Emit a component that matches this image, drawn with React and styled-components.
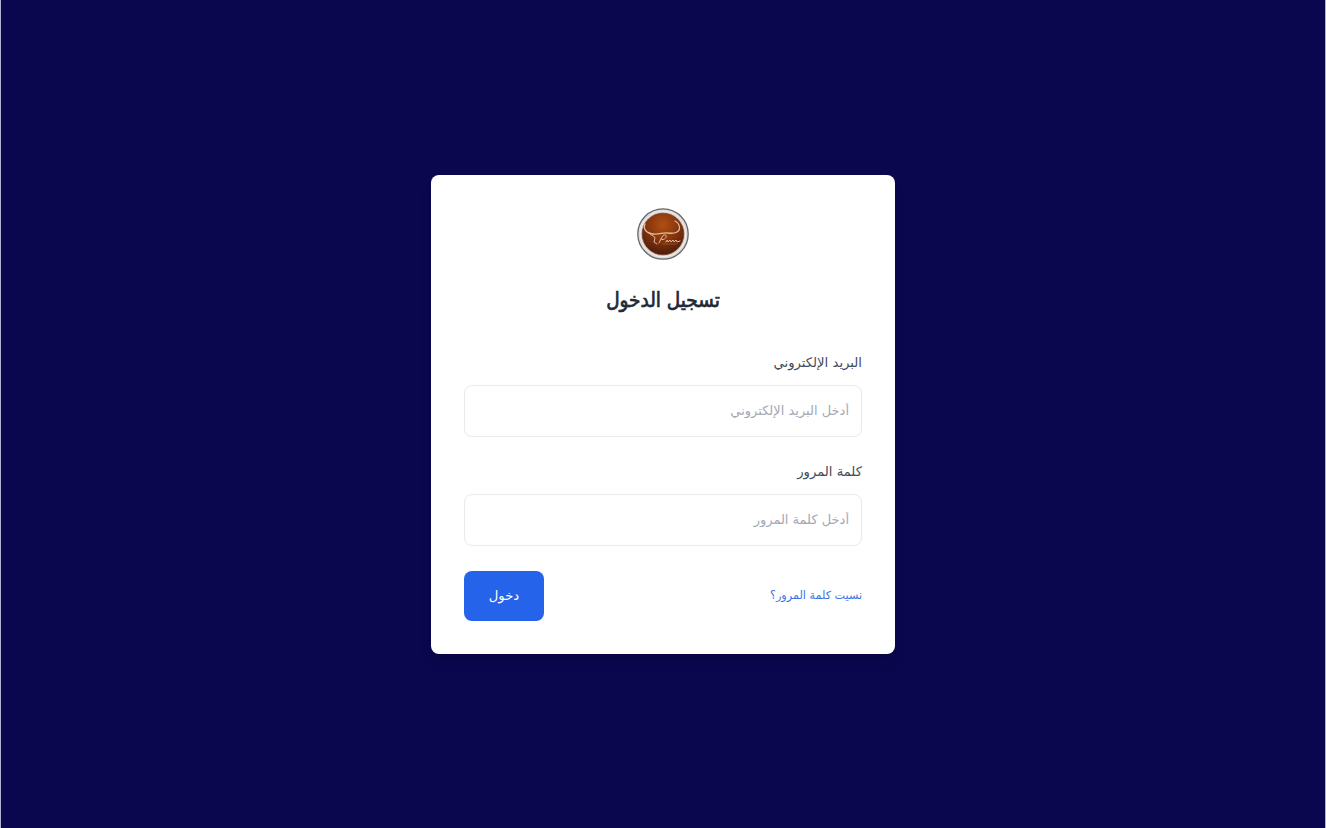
import React from "react";
import styled, { createGlobalStyle } from "styled-components";

const GlobalStyle = createGlobalStyle`
  *, *::before, *::after { box-sizing: border-box; }
  body { margin: 0; }
  body, input, button { font-family: "DejaVu Sans", sans-serif; }
`;

const Page = styled.main`
  display: flex;
  justify-content: center;
  align-items: flex-start;
  height: 828px;
  padding-top: 175px;
  background: #0b074f;
  border: solid #b3b1d0;
  border-width: 0 1px;
`;

const Card = styled.form`
  display: flex;
  flex-direction: column;
  width: 464px;
  height: 479px;
  padding: 33px;
  background: #fff;
  border-radius: 8px;
  box-shadow: 0 10px 15px -3px rgba(0, 0, 0, 0.1), 0 4px 6px -4px rgba(0, 0, 0, 0.1);
`;

const Logo = styled.svg`
  display: block;
  width: 52px;
  height: 52px;
  margin: 0 auto;
`;

const Title = styled.h1`
  margin: 24px 0 34px;
  font-family: "DejaVu Sans Condensed", "DejaVu Sans", sans-serif;
  font-size: 20.5px;
  line-height: 33px;
  font-weight: 400;
  -webkit-text-stroke: 0.7px currentColor;
  text-align: center;
  color: #1f2937;
`;

const Field = styled.div`
  display: flex;
  flex-direction: column;
  gap: 8px;
  margin-bottom: 24px;
`;

const Label = styled.label`
  height: 26px;
  font-size: 13.2px;
  line-height: 24px;
  color: #414b5a;
`;

const Input = styled.input`
  width: 100%;
  height: 52px;
  padding: 0 12px 2px;
  border: 1px solid #e9eaed;
  border-radius: 8px;
  background: #fff;
  font-size: 13px;
  outline: none;
  &::placeholder { color: #a3a9b5; opacity: 1; }
`;

const PasswordField = styled(Field)`
  margin-top: -1px;
`;

const Actions = styled.div`
  display: flex;
  justify-content: space-between;
  align-items: center;
  padding-top: 1px;
`;

const ForgotLink = styled.a`
  padding-bottom: 2px;
  font-size: 11.2px;
  color: #3b73e8;
  text-decoration: none;
`;

const SubmitButton = styled.button`
  width: 80px;
  height: 50px;
  padding: 0 0 2px;
  border: 0;
  border-radius: 8px;
  background: #2563eb;
  color: #fff;
  font-size: 13.2px;
`;

function BrandLogo() {
  return (
    <Logo viewBox="0 0 52 52" aria-hidden="true">
      <defs>
        <radialGradient id="copper" cx="50%" cy="28%" r="70%">
          <stop offset="0" stopColor="#ae4f12" />
          <stop offset="0.5" stopColor="#8a370d" />
          <stop offset="1" stopColor="#4f1c0a" />
        </radialGradient>
      </defs>
      <circle cx="26" cy="26" r="25.2" fill="#dedbda" stroke="#66676b" strokeWidth="1.3" />
      <circle cx="26" cy="26" r="22.7" fill="#dccfc9" stroke="#f3efed" strokeWidth="1" />
      <circle cx="26" cy="26" r="20.8" fill="url(#copper)" stroke="#6d3826" strokeWidth="0.7" />
      <g fill="none" stroke="#e0b89f" strokeLinecap="round" strokeLinejoin="round">
        <path d="M8 16C6 21 9 25 16 26C22 27 26 24 31 25C38 26 43 24 42.5 19C42 16 40 14 38 13" strokeWidth="1.3" />
        <path d="M13 26C15 28 18 28 18 30L17 34L20 36" strokeWidth="1" />
        <path d="M22 35L25 29C27 25 31 27 28.5 30C27 32 25 32 24 31" strokeWidth="1" />
        <path d="M29 34L30 32L31 34L33 32L34 34L36 32L37 34L39 32L40 34L43 33" strokeWidth="1" />
        <path d="M26 36H40" strokeWidth="0.5" opacity="0.5" />
      </g>
    </Logo>
  );
}

export default function App() {
  return (
    <>
      <GlobalStyle />
      <Page dir="rtl" lang="ar">
        <Card onSubmit={(event) => event.preventDefault()}>
          <BrandLogo />
          <Title>تسجيل الدخول</Title>
          <Field>
            <Label htmlFor="email">البريد الإلكتروني</Label>
            <Input id="email" type="email" dir="rtl" placeholder="أدخل البريد الإلكتروني" />
          </Field>
          <PasswordField>
            <Label htmlFor="password">كلمة المرور</Label>
            <Input id="password" type="password" dir="rtl" placeholder="أدخل كلمة المرور" />
          </PasswordField>
          <Actions>
            <ForgotLink href="#">نسيت كلمة المرور؟</ForgotLink>
            <SubmitButton type="submit">دخول</SubmitButton>
          </Actions>
        </Card>
      </Page>
    </>
  );
}
